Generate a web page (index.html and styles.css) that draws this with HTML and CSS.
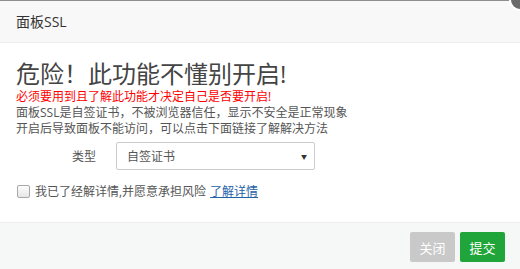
FILE: index.html
```html
<!DOCTYPE html>
<html lang="zh-CN">
<head>
<meta charset="utf-8">
<title>面板SSL</title>
<link rel="stylesheet" href="styles.css">
</head>
<body>
<div class="layer">
  <div class="layer-title">面板SSL</div>
  <span class="layer-close"></span>
  <div class="layer-content">
    <h1 class="danger-title">危险！此功能不懂别开启!</h1>
    <p class="danger-tip">必须要用到且了解此功能才决定自己是否要开启!</p>
    <p class="desc">面板SSL是自签证书，不被浏览器信任，显示不安全是正常现象</p>
    <p class="desc">开启后导致面板不能访问，可以点击下面链接了解解决方法</p>
    <div class="form-row">
      <span class="form-label">类型</span>
      <div class="select">
        <span class="select-text">自签证书</span>
        <span class="select-arrow">▼</span>
      </div>
    </div>
    <label class="agree-row">
      <span class="checkbox"></span>
      <span class="agree-text">我已了经解详情,并愿意承担风险</span>
      <a class="agree-link" href="#">了解详情</a>
    </label>
  </div>
  <div class="layer-footer">
    <button class="btn btn-close">关闭</button>
    <button class="btn btn-submit">提交</button>
  </div>
</div>
</body>
</html>
```
FILE: styles.css
```css
html, body {
  margin: 0;
  padding: 0;
  background: #fff;
}
body {
  font-family: "Open Sans", "Noto Sans CJK SC", sans-serif;
  color: #555;
  width: 520px;
  height: 269px;
  overflow: hidden;
}
.layer {
  position: relative;
  width: 520px;
  height: 269px;
  display: flex;
  flex-direction: column;
  border-top: 1px solid #8e8e8e;
  box-sizing: border-box;
}
.layer-title {
  height: 41px;
  line-height: 41px;
  padding-left: 16px;
  background: #f8f8f8;
  border-bottom: 1px solid #eee;
  font-size: 14px;
  color: #333;
}
.layer-close {
  position: absolute;
  right: -11px;
  top: -12px;
  width: 18px;
  height: 18px;
  border-radius: 50%;
  background: #6b6b6b;
  border: 2px solid #fff;
}
.layer-content {
  flex: 1;
  padding: 17px 16px 0;
}
.danger-title {
  margin: 0 0 1px;
  font-size: 24px;
  line-height: 28px;
  font-weight: normal;
  color: #444;
}
.danger-tip {
  margin: 0;
  font-size: 12px;
  line-height: 16px;
  color: #f00;
}
.desc {
  margin: 0;
  font-size: 12px;
  line-height: 16px;
  color: #555;
}
.form-row {
  display: flex;
  align-items: center;
  margin-top: 5px;
}
.form-label {
  width: 80px;
  margin-right: 20px;
  text-align: right;
  font-size: 12px;
  color: #555;
}
.select {
  width: 199px;
  height: 28px;
  box-sizing: border-box;
  border: 1px solid #ccc;
  border-radius: 2px;
  display: flex;
  align-items: center;
  justify-content: space-between;
  padding: 0 7px 0 10px;
  font-size: 12px;
  color: #555;
}
.select-arrow {
  font-size: 6px;
  color: #333;
}
.agree-row {
  display: flex;
  align-items: center;
  margin-top: 11px;
  height: 20px;
  font-size: 12px;
  color: #555;
}
.checkbox {
  width: 11px;
  height: 11px;
  margin-left: 1px;
  margin-right: 5px;
  border: 1px solid #a8a8a8;
  border-radius: 2px;
  background: linear-gradient(#fdfdfd, #e6e6e6);
}
.agree-link {
  margin-left: 4px;
  color: #1e62a8;
  text-decoration: underline;
}
.layer-footer {
  box-sizing: border-box;
  height: 47px;
  flex: none;
  border-top: 1px solid #eee;
  background: #f6f7f7;
  display: flex;
  justify-content: flex-end;
  align-items: flex-start;
  gap: 5px;
  padding: 9px 15px 0 0;
}
.btn {
  width: 45px;
  height: 30px;
  border: 0;
  border-radius: 2px;
  color: #fff;
  font-family: "Open Sans", "Noto Sans CJK SC", sans-serif;
  font-size: 13px;
  padding: 0;
}
.btn-close {
  background: #c9c9c9;
}
.btn-submit {
  background: #20a53a;
}
```
